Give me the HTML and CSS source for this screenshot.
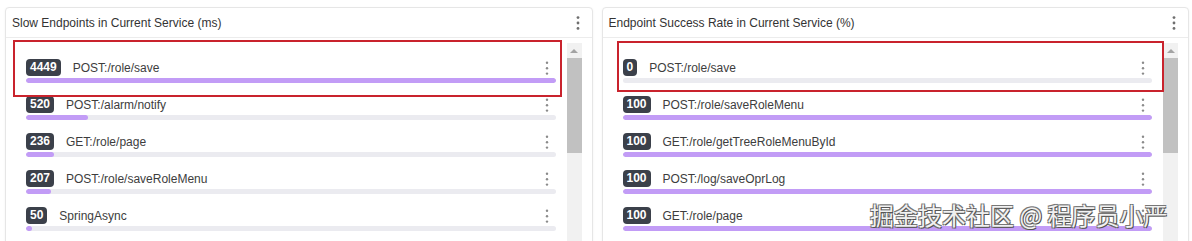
FILE: index.html
```html
<!DOCTYPE html>
<html lang="en">
<head>
  <meta charset="UTF-8">
  <title>Service Dashboard</title>
  <link rel="stylesheet" href="styles.css">
</head>
<body>
  <div class="dashboard">
    <div class="panel">
      <div class="panel-header">
        <span class="panel-title">Slow Endpoints in Current Service (ms)</span>
        <svg class="kebab" width="4" height="14" viewBox="0 0 4 14"><circle cx="2" cy="1.6" r="1.4"/><circle cx="2" cy="7" r="1.4"/><circle cx="2" cy="12.4" r="1.4"/></svg>
      </div>
      <div class="panel-body">
        <div class="list">
          <div class="item">
            <div class="item-label"><span class="calls">4449</span><span class="name">POST:/role/save</span>
              <svg class="kebab small" width="4" height="14" viewBox="0 0 4 14"><circle cx="2" cy="1.8" r="1.2"/><circle cx="2" cy="7.2" r="1.2"/><circle cx="2" cy="12.6" r="1.2"/></svg></div>
            <div class="track"><div class="fill" style="width: 100%"></div></div>
          </div>
          <div class="item">
            <div class="item-label"><span class="calls">520</span><span class="name">POST:/alarm/notify</span>
              <svg class="kebab small" width="4" height="14" viewBox="0 0 4 14"><circle cx="2" cy="1.8" r="1.2"/><circle cx="2" cy="7.2" r="1.2"/><circle cx="2" cy="12.6" r="1.2"/></svg></div>
            <div class="track"><div class="fill" style="width: 11.69%"></div></div>
          </div>
          <div class="item">
            <div class="item-label"><span class="calls">236</span><span class="name">GET:/role/page</span>
              <svg class="kebab small" width="4" height="14" viewBox="0 0 4 14"><circle cx="2" cy="1.8" r="1.2"/><circle cx="2" cy="7.2" r="1.2"/><circle cx="2" cy="12.6" r="1.2"/></svg></div>
            <div class="track"><div class="fill" style="width: 5.3%"></div></div>
          </div>
          <div class="item">
            <div class="item-label"><span class="calls">207</span><span class="name">POST:/role/saveRoleMenu</span>
              <svg class="kebab small" width="4" height="14" viewBox="0 0 4 14"><circle cx="2" cy="1.8" r="1.2"/><circle cx="2" cy="7.2" r="1.2"/><circle cx="2" cy="12.6" r="1.2"/></svg></div>
            <div class="track"><div class="fill" style="width: 4.65%"></div></div>
          </div>
          <div class="item">
            <div class="item-label"><span class="calls">50</span><span class="name">SpringAsync</span>
              <svg class="kebab small" width="4" height="14" viewBox="0 0 4 14"><circle cx="2" cy="1.8" r="1.2"/><circle cx="2" cy="7.2" r="1.2"/><circle cx="2" cy="12.6" r="1.2"/></svg></div>
            <div class="track"><div class="fill" style="width: 1.12%"></div></div>
          </div>
        </div>
        <div class="scrollbar">
          <div class="scroll-arrow"></div>
          <div class="scroll-thumb"></div>
        </div>
      </div>
      <div class="highlight highlight-slow"></div>
    </div>

    <div class="panel">
      <div class="panel-header">
        <span class="panel-title">Endpoint Success Rate in Current Service (%)</span>
        <svg class="kebab" width="4" height="14" viewBox="0 0 4 14"><circle cx="2" cy="1.6" r="1.4"/><circle cx="2" cy="7" r="1.4"/><circle cx="2" cy="12.4" r="1.4"/></svg>
      </div>
      <div class="panel-body">
        <div class="list">
          <div class="item">
            <div class="item-label"><span class="calls">0</span><span class="name">POST:/role/save</span>
              <svg class="kebab small" width="4" height="14" viewBox="0 0 4 14"><circle cx="2" cy="1.8" r="1.2"/><circle cx="2" cy="7.2" r="1.2"/><circle cx="2" cy="12.6" r="1.2"/></svg></div>
            <div class="track"><div class="fill" style="width: 0%"></div></div>
          </div>
          <div class="item">
            <div class="item-label"><span class="calls">100</span><span class="name">POST:/role/saveRoleMenu</span>
              <svg class="kebab small" width="4" height="14" viewBox="0 0 4 14"><circle cx="2" cy="1.8" r="1.2"/><circle cx="2" cy="7.2" r="1.2"/><circle cx="2" cy="12.6" r="1.2"/></svg></div>
            <div class="track"><div class="fill" style="width: 100%"></div></div>
          </div>
          <div class="item">
            <div class="item-label"><span class="calls">100</span><span class="name">GET:/role/getTreeRoleMenuById</span>
              <svg class="kebab small" width="4" height="14" viewBox="0 0 4 14"><circle cx="2" cy="1.8" r="1.2"/><circle cx="2" cy="7.2" r="1.2"/><circle cx="2" cy="12.6" r="1.2"/></svg></div>
            <div class="track"><div class="fill" style="width: 100%"></div></div>
          </div>
          <div class="item">
            <div class="item-label"><span class="calls">100</span><span class="name">POST:/log/saveOprLog</span>
              <svg class="kebab small" width="4" height="14" viewBox="0 0 4 14"><circle cx="2" cy="1.8" r="1.2"/><circle cx="2" cy="7.2" r="1.2"/><circle cx="2" cy="12.6" r="1.2"/></svg></div>
            <div class="track"><div class="fill" style="width: 100%"></div></div>
          </div>
          <div class="item">
            <div class="item-label"><span class="calls">100</span><span class="name">GET:/role/page</span>
              <svg class="kebab small" width="4" height="14" viewBox="0 0 4 14"><circle cx="2" cy="1.8" r="1.2"/><circle cx="2" cy="7.2" r="1.2"/><circle cx="2" cy="12.6" r="1.2"/></svg></div>
            <div class="track"><div class="fill" style="width: 100%"></div></div>
          </div>
        </div>
        <div class="scrollbar">
          <div class="scroll-arrow"></div>
          <div class="scroll-thumb"></div>
        </div>
      </div>
      <div class="highlight highlight-rate"></div>
    </div>
  </div>

  <div class="watermark">掘金技术社区 @ 程序员小严</div>
</body>
</html>
```

FILE: styles.css
```css
html, body {
  height: 241px;
}

body {
  font-family: "Liberation Sans", Arial, sans-serif;
  font-size: 12px;
  color: #3d3d3d;
  margin: 0;
  padding: 7px 3px 0 5px;
  background: #ffffff;
  overflow: hidden;
  box-sizing: border-box;
  position: relative;
}

.dashboard {
  display: grid;
  grid-template-columns: 1fr 1fr;
  gap: 9px;
}

.panel {
  position: relative;
  height: 270px;
  border: 1px solid #e6e6e6;
  border-radius: 4px;
  box-shadow: 0 1px 3px rgba(0, 0, 0, 0.05);
  background: #ffffff;
  display: flex;
  flex-direction: column;
}

.panel-header {
  height: 29px;
  border-bottom: 1px solid #ececec;
  display: flex;
  align-items: center;
  justify-content: space-between;
  padding: 0 12px 0 6px;
}

.panel-title {
  color: #333333;
  font-size: 12px;
}

.kebab {
  fill: #6f6f6f;
  display: block;
}

.kebab.small {
  fill: #8a8a8a;
  margin-left: auto;
  margin-right: 7px;
}

.panel-body {
  flex: 1;
  display: flex;
}

.list {
  flex: 1;
  padding: 21px 0 0 20px;
}

.item {
  height: 37px;
}

.item-label {
  display: flex;
  align-items: center;
  height: 17px;
}

.calls {
  background: #3b404a;
  color: #ffffff;
  font-weight: bold;
  font-size: 12px;
  line-height: 17px;
  height: 17px;
  padding: 0 4px;
  border-radius: 4px;
  margin-right: 12px;
}

.name {
  color: #3d3d3d;
  white-space: nowrap;
}

.track {
  margin-top: 2px;
  height: 5px;
  background: #ebebf0;
  border-radius: 3px;
  overflow: hidden;
}

.fill {
  height: 100%;
  background: #c29cf6;
  border-radius: 3px;
}

.scrollbar {
  width: 15px;
  margin: 5px 10px 0 11px;
  background: #f1f1f1;
  display: flex;
  flex-direction: column;
  align-items: center;
}

.scroll-arrow {
  width: 0;
  height: 0;
  margin: 6px 0 5px;
  border-left: 4px solid transparent;
  border-right: 4px solid transparent;
  border-bottom: 4px solid #a3a3a3;
}

.scroll-thumb {
  width: 100%;
  height: 95px;
  background: #c1c1c1;
}

.highlight {
  position: absolute;
  border: 2px solid #c9232d;
  box-sizing: border-box;
}

.highlight-slow {
  left: 7px;
  top: 32px;
  width: 549px;
  height: 57px;
}

.highlight-rate {
  left: 14px;
  top: 33px;
  width: 547px;
  height: 51px;
}

.watermark {
  position: absolute;
  left: 870px;
  top: 199px;
  font-family: "Noto Sans CJK SC", sans-serif;
  font-size: 24px;
  line-height: 32px;
  color: rgba(255, 255, 255, 0.92);
  text-shadow: 1px 1px 0 #555, -1px -1px 0 #777, 1px -1px 0 #777, -1px 1px 0 #777;
  white-space: nowrap;
}
```
